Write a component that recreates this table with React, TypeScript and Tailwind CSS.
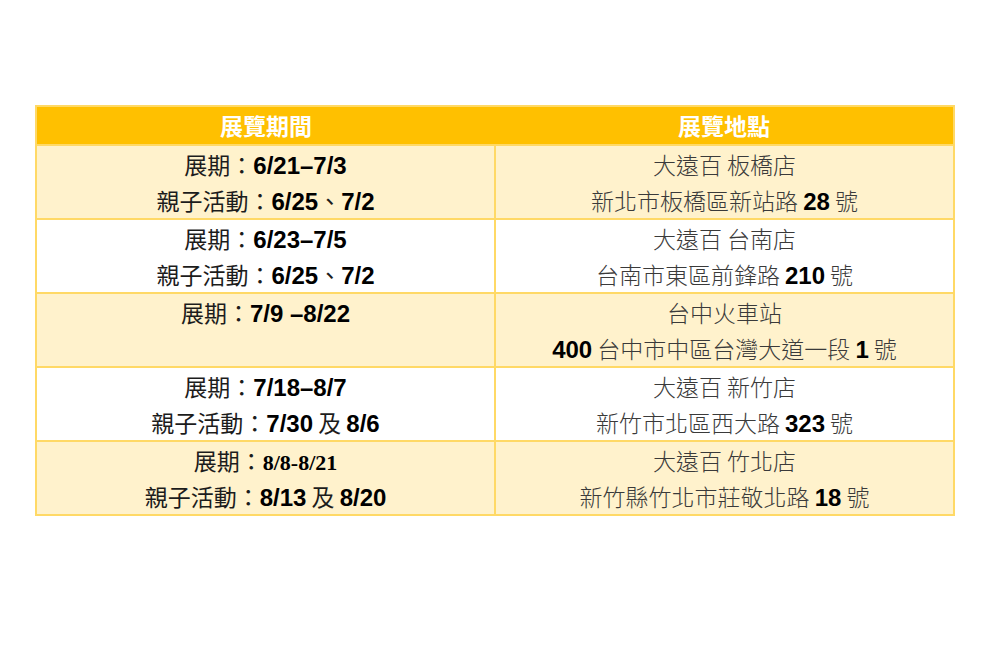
import React from "react";

type Part = { t: string; num?: boolean; serif?: boolean };

interface Row {
  left: Part[][];
  right: Part[][];
  tint: boolean;
}

const rows: Row[] = [
  {
    tint: true,
    left: [
      [{ t: "展期：" }, { t: "6/21–7/3", num: true }],
      [{ t: "親子活動：" }, { t: "6/25", num: true }, { t: "、" }, { t: "7/2", num: true }],
    ],
    right: [
      [{ t: "大遠百 板橋店" }],
      [{ t: "新北市板橋區新站路 " }, { t: "28", num: true }, { t: " 號" }],
    ],
  },
  {
    tint: false,
    left: [
      [{ t: "展期：" }, { t: "6/23–7/5", num: true }],
      [{ t: "親子活動：" }, { t: "6/25", num: true }, { t: "、" }, { t: "7/2", num: true }],
    ],
    right: [
      [{ t: "大遠百 台南店" }],
      [{ t: "台南市東區前鋒路 " }, { t: "210", num: true }, { t: " 號" }],
    ],
  },
  {
    tint: true,
    left: [[{ t: "展期：" }, { t: "7/9 –8/22", num: true }]],
    right: [
      [{ t: "台中火車站" }],
      [{ t: "400", num: true }, { t: " 台中市中區台灣大道一段 " }, { t: "1", num: true }, { t: " 號" }],
    ],
  },
  {
    tint: false,
    left: [
      [{ t: "展期：" }, { t: "7/18–8/7", num: true }],
      [{ t: "親子活動：" }, { t: "7/30", num: true }, { t: " 及 " }, { t: "8/6", num: true }],
    ],
    right: [
      [{ t: "大遠百 新竹店" }],
      [{ t: "新竹市北區西大路 " }, { t: "323", num: true }, { t: " 號" }],
    ],
  },
  {
    tint: true,
    left: [
      [{ t: "展期：" }, { t: "8/8-8/21", serif: true }],
      [{ t: "親子活動：" }, { t: "8/13", num: true }, { t: " 及 " }, { t: "8/20", num: true }],
    ],
    right: [
      [{ t: "大遠百 竹北店" }],
      [{ t: "新竹縣竹北市莊敬北路 " }, { t: "18", num: true }, { t: " 號" }],
    ],
  },
];

function Line({ parts, light }: { parts: Part[]; light?: boolean }) {
  return (
    <div className="h-[36px] leading-[36px] whitespace-pre">
      {parts.map((p, i) => {
        if (p.serif)
          return (
            <span key={i} className="font-['Liberation_Serif',serif] font-bold text-black text-[22px]">
              {p.t}
            </span>
          );
        if (p.num)
          return (
            <span key={i} className="font-['Liberation_Sans',sans-serif] font-bold text-black text-[24px]">
              {p.t}
            </span>
          );
        return (
          <span key={i} className={light ? "font-light text-[#3a3a3a]" : "text-[#1c1c1c]"}>
            {p.t}
          </span>
        );
      })}
    </div>
  );
}

export default function App() {
  return (
    <div className="w-[1000px] h-[667px] bg-white pt-[105px] pl-[35px] font-['Noto_Sans_CJK_TC',sans-serif] text-[23px]">
      <table className="w-[920px] border-collapse table-fixed border-2 border-[#ffd966]">
        <thead>
          <tr className="bg-[#ffc000]">
            <th className="w-[459px] h-[37px] p-0 text-white font-bold text-[23px] leading-[37px]">展覽期間</th>
            <th className="h-[37px] p-0 text-white font-bold text-[23px] leading-[37px]">展覽地點</th>
          </tr>
        </thead>
        <tbody>
          {rows.map((r, i) => (
            <tr key={i} className={r.tint ? "bg-[#fff2cc]" : "bg-white"}>
              <td className="border-2 border-[#ffd966] align-top text-center h-[72px] p-0">
                {r.left.map((l, j) => (
                  <Line key={j} parts={l} />
                ))}
              </td>
              <td className="border-2 border-[#ffd966] align-top text-center h-[72px] p-0">
                {r.right.map((l, j) => (
                  <Line key={j} parts={l} light />
                ))}
              </td>
            </tr>
          ))}
        </tbody>
      </table>
    </div>
  );
}
